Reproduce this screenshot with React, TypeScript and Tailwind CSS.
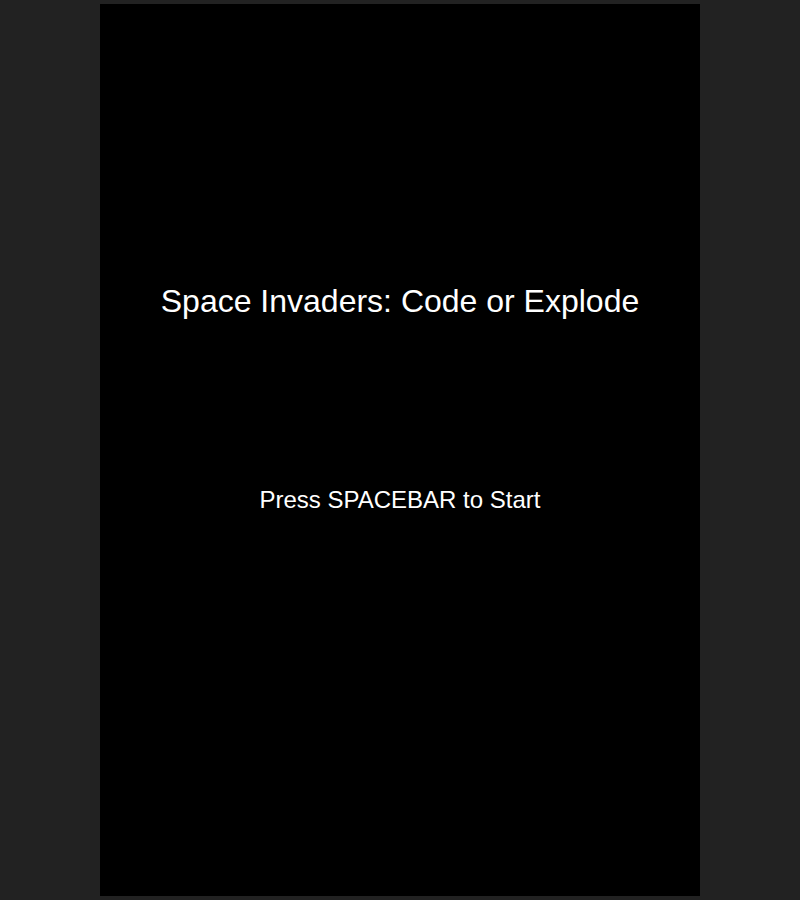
export default function App() {
  return (
    <div className="min-h-screen bg-[#222222] py-1" style={{ fontFamily: '"Liberation Sans", Arial, sans-serif' }}>
      <div className="mx-auto flex h-[892px] w-[600px] flex-col items-center bg-black pt-[281px] text-white">
        <h1 className="text-[32px] leading-none font-normal">Space Invaders: Code or Explode</h1>
        <p className="mt-[171px] text-[24px] leading-none">Press SPACEBAR to Start</p>
      </div>
    </div>
  );
}
